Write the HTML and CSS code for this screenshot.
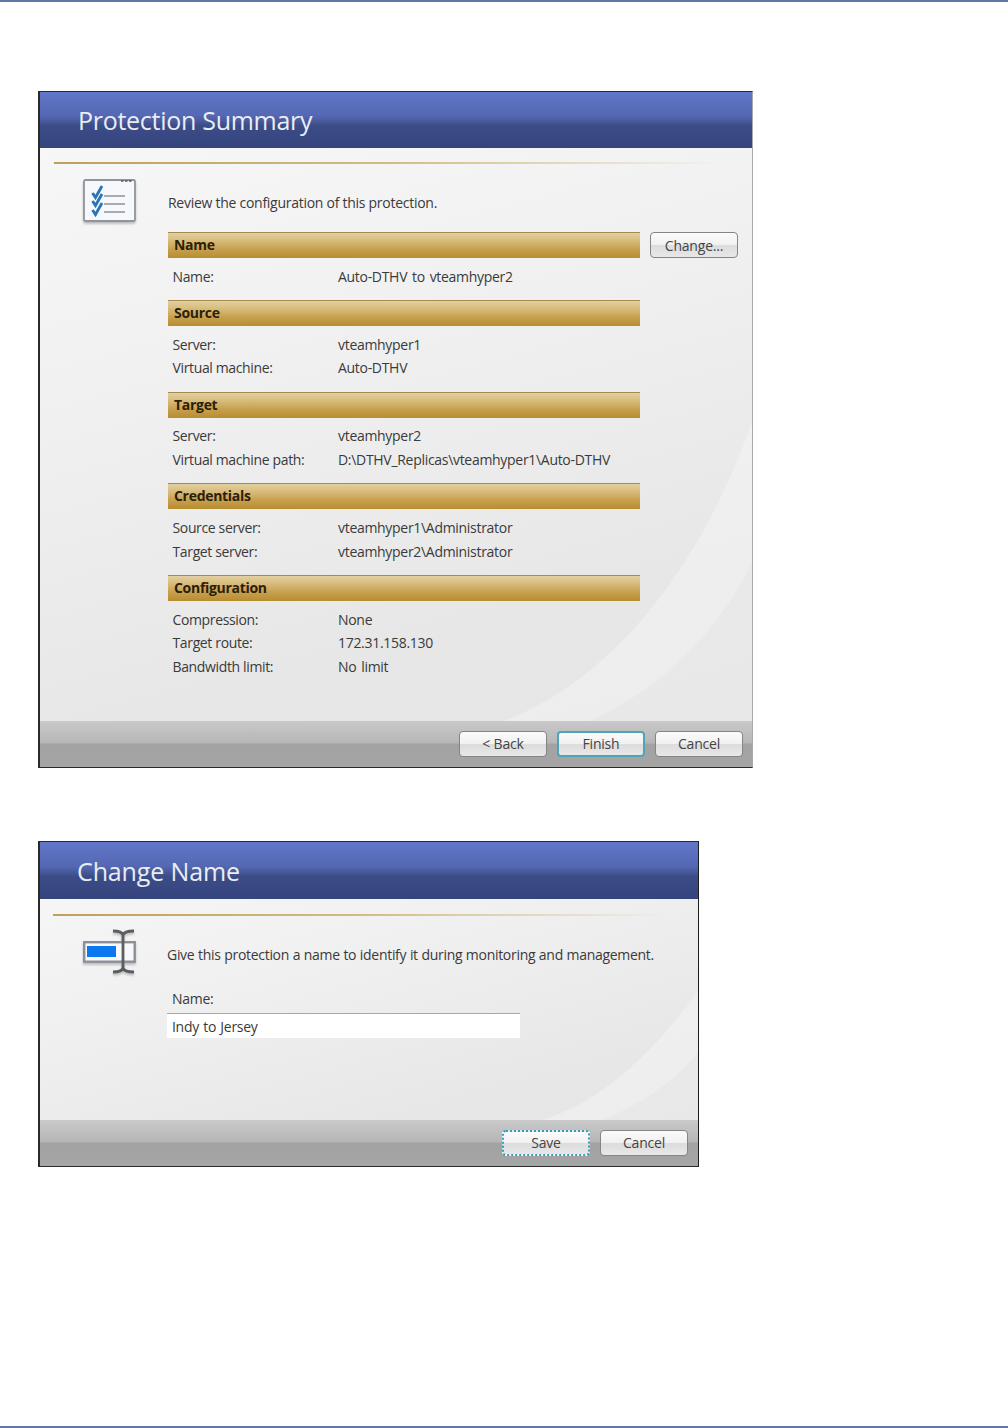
FILE: index.html
```html
<!DOCTYPE html>
<html lang="en">
<head>
<meta charset="utf-8">
<title>Protection Summary</title>
<link rel="stylesheet" href="styles.css">
</head>
<body>
<div class="page">
  <section class="window window-summary">
    <svg class="swoosh" viewBox="0 0 713 675" preserveAspectRatio="none" aria-hidden="true">
      <path class="swoosh-light" d="M462 630 C 570 590 660 480 713 330 L713 630 Z"/>
      <path class="swoosh-dim" d="M547 630 C 620 600 680 540 713 470 L713 630 Z"/>
    </svg>
    <header class="banner"><h1 class="banner-title">Protection Summary</h1></header>
    <div class="rule"></div>
    <div class="body">
      <svg class="icon" width="54" height="45" viewBox="0 0 54 45" aria-hidden="true">
        <rect x="1" y="1" width="51" height="41" rx="1.5" fill="#f6f8fb" stroke="#8e959e" stroke-width="1.8"/>
        <path d="M38 2h2.5M42 2h2.5M46 2h2.5" stroke="#555" stroke-width="1.6"/>
        <path d="M9.5 14l3 4.5L19 7M9.5 22l3 4.5L19 15M9.5 31l3 4.5L19 24" fill="none" stroke="#2a75b5" stroke-width="2.8"/>
        <path d="M21 17h21M21 25h21M21 33h21" stroke="#8b9198" stroke-width="1.7"/>
      </svg>
      <div class="content">
        <p class="intro">Review the configuration of this protection.</p>
        <div class="section">
          <div class="section-head">
            <h2 class="bar">Name</h2>
            <button class="btn btn-change" type="button">Change...</button>
          </div>
          <dl class="rows">
            <div class="row"><dt>Name:</dt><dd>Auto-DTHV to vteamhyper2</dd></div>
          </dl>
        </div>
        <div class="section">
          <div class="section-head"><h2 class="bar">Source</h2></div>
          <dl class="rows">
            <div class="row"><dt>Server:</dt><dd>vteamhyper1</dd></div>
            <div class="row"><dt>Virtual machine:</dt><dd>Auto-DTHV</dd></div>
          </dl>
        </div>
        <div class="section">
          <div class="section-head"><h2 class="bar">Target</h2></div>
          <dl class="rows">
            <div class="row"><dt>Server:</dt><dd>vteamhyper2</dd></div>
            <div class="row"><dt>Virtual machine path:</dt><dd>D:\DTHV_Replicas\vteamhyper1\Auto-DTHV</dd></div>
          </dl>
        </div>
        <div class="section">
          <div class="section-head"><h2 class="bar">Credentials</h2></div>
          <dl class="rows">
            <div class="row"><dt>Source server:</dt><dd>vteamhyper1\Administrator</dd></div>
            <div class="row"><dt>Target server:</dt><dd>vteamhyper2\Administrator</dd></div>
          </dl>
        </div>
        <div class="section">
          <div class="section-head"><h2 class="bar">Configuration</h2></div>
          <dl class="rows">
            <div class="row"><dt>Compression:</dt><dd>None</dd></div>
            <div class="row"><dt>Target route:</dt><dd>172.31.158.130</dd></div>
            <div class="row"><dt>Bandwidth limit:</dt><dd>No limit</dd></div>
          </dl>
        </div>
      </div>
    </div>
    <footer class="footer">
      <button class="btn" type="button">&lt; Back</button>
      <button class="btn btn-default" type="button">Finish</button>
      <button class="btn" type="button">Cancel</button>
    </footer>
  </section>

  <section class="window window-name">
    <svg class="swoosh" viewBox="0 0 659 324" preserveAspectRatio="none" aria-hidden="true">
      <path class="swoosh-light" d="M499 279 C 560 262 610 215 659 150 L659 279 Z"/>
      <path class="swoosh-dim" d="M559 279 C 600 265 635 240 659 210 L659 279 Z"/>
    </svg>
    <header class="banner banner-name"><h1 class="banner-title">Change Name</h1></header>
    <div class="rule rule-name"></div>
    <div class="body body-name">
      <svg class="icon icon-name" width="54" height="48" viewBox="0 0 54 48" aria-hidden="true">
        <rect x="1.2" y="13.2" width="50.5" height="19.5" fill="#f7f8fb" stroke="#8c8f97" stroke-width="2.4"/>
        <rect x="4" y="17" width="29" height="11" fill="#0b78f0"/>
        <path d="M30 2c5 0 9 .5 10 4 1-3.500 5-4 11-4M30 43c5 0 9-.5 10-4 1 3.500 5 4 11 4M40 6v33" fill="none" stroke="#5b5d60" stroke-width="2.8"/>
      </svg>
      <div class="content content-name">
        <p class="intro intro-name">Give this protection a name to identify it during monitoring and management.</p>
        <label class="field-label" for="pname">Name:</label>
        <input class="field" id="pname" type="text" value="Indy to Jersey">
      </div>
    </div>
    <footer class="footer footer-name">
      <button class="btn btn-focus" type="button">Save</button>
      <button class="btn" type="button">Cancel</button>
    </footer>
  </section>
</div>
</body>
</html>
```
FILE: styles.css
```css
* { box-sizing: border-box; }
html, body { margin: 0; padding: 0; }
body {
  width: 1008px;
  height: 1428px;
  background: #fff;
  font-family: "Open Sans", "Noto Sans", sans-serif;
  color: #3a3a3a;
  border-top: 2px solid #5f77a9;
  border-bottom: 2px solid #5f77a9;
  overflow: hidden;
}
.page {
  padding: 89px 0 0 38px;
  display: flex;
  flex-direction: column;
  gap: 73px;
  align-items: flex-start;
}
.window {
  position: relative;
  display: flex;
  flex-direction: column;
  border: 1px solid #2a2a2a;
  border-left-width: 2px;
  border-right: 1px solid #a9a9a9;
  background: linear-gradient(165deg, #f8f8f8 0%, #f1f1f1 35%, #e7e7e7 75%, #e6e6e6 100%);
}
.window-summary { width: 715px; height: 677px; }
.window-name { width: 661px; height: 326px; border-right-color: #1c1c1c; }
.swoosh { position: absolute; inset: 0; width: 100%; height: 100%; }
.swoosh-light { fill: #fff; opacity: 0.3; }
.swoosh-dim { fill: #e4e4e4; opacity: 0.5; }
.banner {
  position: relative;
  height: 56px;
  flex: none;
  padding: 11px 0 0 38px;
  background: linear-gradient(#6176c8 0%, #5468b4 42%, #495a9c 52%, #3c4c87 60%, #35447d 100%);
}
.banner-name { height: 57px; padding: 12px 0 0 37px; }
.banner-title {
  margin: 0;
  font-size: 25px;
  line-height: 34px;
  font-weight: 400;
  color: #e9edf4;
  letter-spacing: -0.28px;
}
.banner-name .banner-title { letter-spacing: -0.12px; }
.rule {
  position: relative;
  flex: none;
  height: 2px;
  margin: 14px 30px 0 14px;
  background: linear-gradient(90deg, #bfa05c 0%, #d3bb84 50%, rgba(226, 214, 180, 0) 100%);
}
.rule-name { margin-top: 15px; margin-left: 13px; }
.body {
  position: relative;
  flex: 1;
  display: flex;
  padding: 15px 0 0 43px;
}
.body-name { padding-top: 13px; }
.icon { flex: none; filter: drop-shadow(0 2px 1px rgba(90, 90, 90, 0.35)); }
.content { margin-left: 31px; flex: 1; }
.content-name { margin-left: 30px; }
.intro {
  margin: 14px 0 19px;
  font-size: 14px;
  line-height: 20px;
  letter-spacing: -0.27px;
}
.section { margin-bottom: 12px; }
.section-head {
  display: flex;
  gap: 10px;
  align-items: center;
}
.bar {
  width: 472px;
  height: 26px;
  margin: 0;
  padding-left: 6px;
  font-size: 14px;
  line-height: 24px;
  font-weight: 700;
  letter-spacing: -0.3px;
  color: #2c2008;
  background: linear-gradient(#e2d0a2 0%, #d8bc7c 30%, #c7a04e 65%, #b78d30 100%);
  border-top: 1px solid #a78a4e;
  flex: none;
}
.rows { margin: 6.500px 0 0; padding: 0; }
.row {
  display: flex;
  height: 23.6px;
  font-size: 14px;
  line-height: 23.6px;
  letter-spacing: -0.36px;
  padding-left: 4.500px;
}
.row dt { width: 165.500px; flex: none; }
.row dd { margin: 0; letter-spacing: -0.3px; word-spacing: 1.500px; }
.footer {
  position: relative;
  margin-top: auto;
  flex: none;
  height: 46px;
  padding: 10px 9px 0 0;
  display: flex;
  justify-content: flex-end;
  gap: 10px;
  background: linear-gradient(#c9c9c9 0%, #b6b6b6 48%, #a2a2a2 50%, #a5a5a5 100%);
}
.footer-name { padding: 10px 10px 0 0; }
.btn {
  width: 88px;
  height: 26px;
  padding: 0 0 2px;
  font-family: inherit;
  font-size: 14px;
  letter-spacing: -0.2px;
  color: #444;
  border: 1px solid #858585;
  border-radius: 4px;
  background: linear-gradient(#fbfbfb 0%, #f1f1f1 48%, #dcdcdc 52%, #e8e8e8 100%);
  flex: none;
}
.btn-change { padding-bottom: 0; }
.btn-default { border: 2px solid #4ea4b8; }
.btn-focus { border: 2px dotted #3c9db4; }
.intro-name { margin: 16px 0 24px; word-spacing: 0.3px; letter-spacing: -0.3px; }
.field-label {
  display: block;
  padding-left: 5px;
  font-size: 14px;
  line-height: 20px;
  letter-spacing: -0.3px;
}
.field {
  display: block;
  width: 353px;
  height: 25px;
  margin-top: 4px;
  padding: 0 5px;
  border: 0;
  border-top: 1px solid #a8a8a8;
  background: #fff;
  font-family: inherit;
  font-size: 14px;
  letter-spacing: -0.3px;
  word-spacing: 1px;
  color: #3a3a3a;
}
```
